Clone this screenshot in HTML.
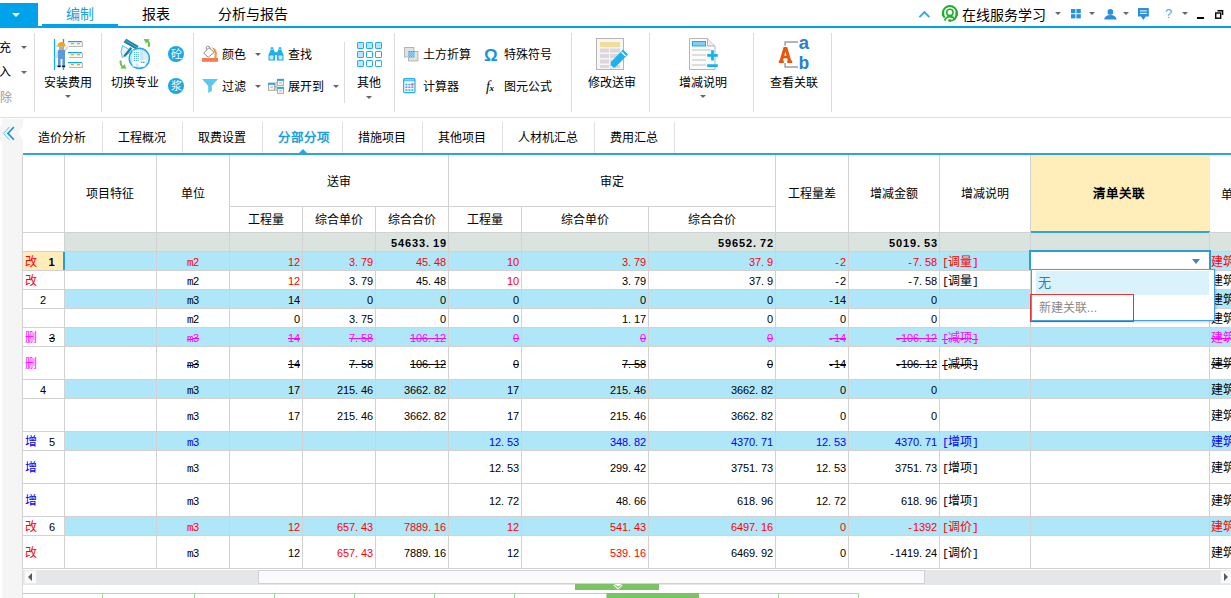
<!DOCTYPE html>
<html lang="zh-CN"><head><meta charset="utf-8"><title>UI</title><style>
*{box-sizing:border-box;margin:0;padding:0}
html,body{width:1231px;height:598px;overflow:hidden;background:#fff}
body{position:relative;font-family:"Liberation Sans",sans-serif;font-size:12px;color:#000}
.a{position:absolute;white-space:nowrap;overflow:hidden}
.t{position:absolute;white-space:nowrap;line-height:14px;height:14px}
.c{text-align:center}
.j{text-align:justify;text-align-last:justify}
.r{text-align:right}
.n{font-family:"Liberation Sans",sans-serif;font-size:11px;letter-spacing:-0.12px}
.n i{font-style:normal}
.n i.p{letter-spacing:2.94px}
.n i.h{letter-spacing:1.2px;padding-left:1.14px}
.n i.m{font-family:"Liberation Mono",monospace;letter-spacing:-0.6px}
.n.b{letter-spacing:0.88px}
.n.b i.p{letter-spacing:3.94px}
.k{font-family:"Liberation Mono",monospace;font-size:11.5px;letter-spacing:-0.9px}
.b{font-weight:bold}
.red{color:#f00}.mag{color:#f0f}.blu{color:#00f}
.s{text-decoration:line-through}
.da{position:absolute;width:0;height:0;border-left:3px solid transparent;border-right:3px solid transparent;border-top:3px solid #666}
.vs{position:absolute;width:1px;background:#dcdcdc}
.hl{position:absolute;height:1px;background:#d2d2d2}
.vl{position:absolute;width:1px;background:#d2d2d2}
.cell{position:absolute;white-space:nowrap;overflow:hidden;height:14px;line-height:14px}
</style></head><body>
<div class="a" style="left:0;top:26px;width:1231px;height:2px;background:#00a2e9"></div>
<div class="a" style="left:0;top:3px;width:38px;height:25px;background:#00a2e9"></div>
<div class="a" style="left:12px;top:13px;width:0;height:0;border-left:4px solid transparent;border-right:4px solid transparent;border-top:4px solid #fff"></div>
<div class="a" style="left:42px;top:24px;width:76px;height:4px;background:#00a2e9"></div>
<div class="t j" style="left:66px;top:5px;width:28px;font-size:14px;line-height:18px;height:18px;color:#1a9fe0">编制</div>
<div class="t j" style="left:142px;top:5px;width:28px;font-size:14px;line-height:18px;height:18px;color:#000">报表</div>
<div class="t j" style="left:218px;top:5px;width:70px;font-size:14px;line-height:18px;height:18px;color:#000">分析与报告</div>
<svg class="a" style="left:918px;top:10px" width="13" height="9" viewBox="0 0 13 9"><path d="M1.4 7.2 L6.4 2.2 L11.4 7.2" fill="none" stroke="#2ea8f0" stroke-width="1.9"/></svg>
<svg class="a" style="left:941px;top:5px" width="18" height="18" viewBox="0 0 18 18"><path d="M3.6 12.6 A7 7 0 1 1 14.2 12.6" fill="none" stroke="#1fae2b" stroke-width="1.9"/><rect x="0.9" y="6" width="2.4" height="5" rx="1" fill="#1fae2b"/><rect x="14.5" y="6" width="2.4" height="5" rx="1" fill="#1fae2b"/><circle cx="8.9" cy="7.4" r="3.2" fill="none" stroke="#1fae2b" stroke-width="1.5"/><path d="M3.6 15.6 Q5 11.6 8.9 11.6 Q12.6 11.6 14 14.6" fill="none" stroke="#1fae2b" stroke-width="1.7"/><path d="M15.6 11 Q14.6 15.4 9.6 15.6" fill="none" stroke="#1fae2b" stroke-width="1.3"/><ellipse cx="8.9" cy="15.6" rx="1.9" ry="1.3" fill="#1fae2b"/></svg>
<div class="t j" style="left:962px;top:6px;width:84px;font-size:14px;line-height:18px;height:18px">在线服务学习</div>
<div class="da" style="left:1055px;top:12px"></div>
<svg class="a" style="left:1071px;top:9px" width="10" height="10" viewBox="0 0 10 10"><rect x="0" y="0" width="4.4" height="4.2" fill="#2a8fdc"/><rect x="5.4" y="0" width="4.4" height="4.2" fill="#2a8fdc"/><rect x="0" y="5.2" width="4.4" height="4.2" fill="#2a8fdc"/><rect x="5.4" y="5.2" width="4.4" height="4.2" fill="#2a8fdc"/></svg>
<div class="da" style="left:1089px;top:12px"></div>
<svg class="a" style="left:1104px;top:9px" width="13" height="11" viewBox="0 0 13 11"><circle cx="6.4" cy="2.9" r="2.9" fill="#2a8fdc"/><path d="M0.2 10.6 Q0.8 6 6.4 6 Q12 6 12.6 10.6 Z" fill="#2a8fdc"/></svg>
<div class="da" style="left:1123px;top:12px"></div>
<svg class="a" style="left:1138px;top:8px" width="11" height="12" viewBox="0 0 11 12"><path d="M0 0 H10.8 V8.4 H7.8 L5.4 12 L3 8.4 H0 Z" fill="#2a8fdc"/><path d="M2 2.9 H8.8 M2 5.4 H8.8" stroke="#fff" stroke-width="1"/></svg>
<div class="t" style="left:1165px;top:6px;font-size:13px;line-height:16px;height:16px;color:#35b0ee">?</div>
<div class="da" style="left:1182px;top:12px"></div>
<div class="a" style="left:1197px;top:17px;width:7px;height:2px;background:#000"></div>
<svg class="a" style="left:1215px;top:10px" width="9" height="9" viewBox="0 0 9 9"><path d="M2.5 0.7 H7.6 V5" fill="none" stroke="#000" stroke-width="1.4"/><rect x="0.7" y="3" width="5" height="5.2" fill="#fff" stroke="#000" stroke-width="1.4"/></svg>
<div class="vs" style="left:34px;top:33px;height:79px"></div>
<div class="vs" style="left:101px;top:33px;height:79px"></div>
<div class="vs" style="left:193px;top:33px;height:79px"></div>
<div class="vs" style="left:394px;top:33px;height:79px"></div>
<div class="vs" style="left:571px;top:33px;height:79px"></div>
<div class="vs" style="left:649px;top:33px;height:79px"></div>
<div class="vs" style="left:753px;top:33px;height:79px"></div>
<div class="vs" style="left:831px;top:33px;height:79px"></div>
<div class="vs" style="left:344px;top:42px;height:61px"></div>
<div class="a" style="left:0;top:117px;width:1231px;height:1px;background:#dedede"></div>
<div class="t c" style="left:-1px;top:41px;width:12px">充</div>
<div class="da" style="left:21px;top:46px"></div>
<div class="t c" style="left:-1px;top:65px;width:12px">入</div>
<div class="da" style="left:21px;top:71px"></div>
<div class="t c" style="left:0px;top:91px;width:12px;color:#9a9a9a">除</div>
<svg class="a" style="left:53px;top:38px" width="31" height="33" viewBox="0 0 31 33">
<path d="M1.5 1 V32 M10.5 1 V32" stroke="#00aeef" stroke-width="1.2"/>
<path d="M1.5 8 H10.5 M1.5 19 H10.5 M1.5 28 H10.5" stroke="#7fd3f5" stroke-width="1"/>
<g><rect x="16" y="4" width="14" height="5" fill="#b9b9b9"/><rect x="15" y="3" width="14" height="5" fill="#f4f4f4"/><rect x="15" y="3" width="14" height="1.2" fill="#00aeef"/><path d="M18 5.7 H21 M24 5.7 H27" stroke="#f7a21b" stroke-width="1.2"/></g>
<g transform="translate(0,11)"><rect x="16" y="4" width="14" height="5" fill="#b9b9b9"/><rect x="15" y="3" width="14" height="5" fill="#f4f4f4"/><rect x="15" y="3" width="14" height="1.2" fill="#00aeef"/><path d="M18 5.7 H21 M24 5.7 H27" stroke="#f7a21b" stroke-width="1.2"/></g>
<g transform="translate(0,21)"><rect x="16" y="4" width="14" height="5" fill="#b9b9b9"/><rect x="15" y="3" width="14" height="5" fill="#f4f4f4"/><rect x="15" y="3" width="14" height="1.2" fill="#00aeef"/><path d="M18 5.7 H21 M24 5.7 H27" stroke="#f7a21b" stroke-width="1.2"/></g>
<path d="M4.5 8.5 Q4.5 4 8.5 4 Q12.5 4 12.5 8.5 Z" fill="#f7a21b"/>
<rect x="6" y="8.5" width="5" height="3.5" fill="#c9a98a"/>
<path d="M11 14 L15 8.5" stroke="#e3d3c0" stroke-width="1.6"/>
<path d="M3.5 13 L5.5 12 L5.5 20 L3 19 Z" fill="#d8d8d8"/>
<rect x="5" y="12" width="7" height="9" fill="#5a9ad8"/>
<rect x="5" y="21" width="2.6" height="7" fill="#5a9ad8"/><rect x="9.4" y="21" width="2.6" height="7" fill="#5a9ad8"/>
<rect x="4.6" y="27.6" width="3" height="1.6" fill="#111"/><rect x="9.2" y="27.6" width="3" height="1.6" fill="#111"/>
<path d="M10.5 1 V4.5 M10.5 29 V32" stroke="#00aeef" stroke-width="1.2"/>
</svg>
<div class="t j" style="left:44px;top:76px;width:48px">安装费用</div>
<div class="da" style="left:65px;top:95px"></div>
<svg class="a" style="left:119px;top:38px" width="32" height="32" viewBox="0 0 32 32">
<path d="M3.6 7.6 Q0.6 13.5 3.4 19.6 L13 13 Z" fill="#eef2f5" stroke="#4bbce9" stroke-width="1"/>
<path d="M5.2 18.2 L12.4 9.8" stroke="#1b7ea6" stroke-width="2.2"/>
<path d="M4.6 4.2 L7.2 0.8 L19.6 8 L17.2 11.6 Z" fill="#1b7ea6"/>
<path d="M6.6 2.6 L18 9.4" stroke="#5fb4d3" stroke-width="0.9"/>
<circle cx="20.3" cy="20.3" r="10.1" fill="#c4e8f6" stroke="#1fa8e0" stroke-width="1.4"/>
<path d="M24 13 L28.5 17 L29 24 L25 27 Z" fill="#d9f0f9"/>
<path d="M13.6 28.6 V12.6 H21 V22 H26.4 V28.6 H19.4 V25.4 H16.8 V28.6 Z" fill="#fff"/>
<g fill="#36ace2"><rect x="14.8" y="14" width="1.1" height="1.1"/><rect x="16.7" y="14" width="1.1" height="1.1"/><rect x="18.6" y="14" width="1.1" height="1.1"/>
<rect x="14.8" y="16" width="1.1" height="1.1"/><rect x="16.7" y="16" width="1.1" height="1.1"/><rect x="18.6" y="16" width="1.1" height="1.1"/>
<rect x="14.8" y="18" width="1.1" height="1.1"/><rect x="16.7" y="18" width="1.1" height="1.1"/><rect x="18.6" y="18" width="1.1" height="1.1"/>
<rect x="14.8" y="20" width="1.1" height="1.1"/><rect x="16.7" y="20" width="1.1" height="1.1"/><rect x="18.6" y="20" width="1.1" height="1.1"/>
<rect x="14.8" y="22" width="1.1" height="1.1"/><rect x="16.7" y="22" width="1.1" height="1.1"/><rect x="18.6" y="22" width="1.1" height="1.1"/>
<rect x="21.8" y="23.6" width="1.6" height="1.4"/><rect x="24" y="23.6" width="1.6" height="1.4"/></g>
<path d="M29.6 8.8 Q31 5.2 28.4 2.6" fill="none" stroke="#6cc04a" stroke-width="2"/>
<path d="M24.6 1 L30.8 1.2 L27 5.6 Z" fill="#6cc04a"/>
<path d="M1.8 22.6 Q0.8 26.6 3.8 29" fill="none" stroke="#6cc04a" stroke-width="2"/>
<path d="M7.4 30.8 L1.2 30.6 L5.6 26.2 Z" fill="#6cc04a"/>
</svg>
<div class="t j" style="left:111px;top:76px;width:48px">切换专业</div>
<div class="a c" style="left:168px;top:46px;width:16px;height:16px;border-radius:8px;background:#1ea7e1;color:#fff;font-size:11px;line-height:16px">砼</div>
<div class="a c" style="left:168px;top:78px;width:16px;height:16px;border-radius:8px;background:#1ea7e1;color:#fff;font-size:11px;line-height:16px">浆</div>
<svg class="a" style="left:202px;top:45px" width="17" height="18" viewBox="0 0 17 18">
<rect x="0" y="13" width="16" height="3.8" fill="#f47c52"/>
<path d="M9.6 2.2 Q14.6 3.4 14.8 8 L14.6 13 H12.4 L12.8 8.4 Q12.6 5.4 9.6 2.2 Z" fill="#f5962e"/>
<path d="M1.7 8.2 L6.9 2.7 L12.2 7.3 L6.3 12.3 Z" fill="#fff" stroke="#8d8d8d" stroke-width="1"/>
<path d="M4.4 4.6 Q3.4 1.4 5.6 1.1 Q7.8 0.9 8.4 3.8" fill="none" stroke="#8d8d8d" stroke-width="1"/>
</svg>
<div class="t j" style="left:222px;top:48px;width:24px">颜色</div>
<div class="da" style="left:255px;top:53px"></div>
<svg class="a" style="left:268px;top:47px" width="16" height="14" viewBox="0 0 16 14">
<path d="M2.9 0.3 H5.1 L5.5 2.2 L6.9 5.2 L7.1 13.4 H0.5 V7.6 L2.2 4.2 L2.6 2.2 Z" fill="#1eb0ee"/>
<path d="M13.1 0.3 H10.9 L10.5 2.2 L9.1 5.2 L8.9 13.4 H15.5 V7.6 L13.8 4.2 L13.4 2.2 Z" fill="#1eb0ee"/>
<rect x="6.6" y="5.2" width="2.8" height="3" fill="#1eb0ee"/>
<path d="M2.9 2.4 H5.1 M10.9 2.4 H13.1" stroke="#bfe9fb" stroke-width="0.8"/>
<rect x="1.6" y="8.4" width="3.8" height="4" rx="0.8" fill="#c6ecfc"/><rect x="10.6" y="8.4" width="3.8" height="4" rx="0.8" fill="#c6ecfc"/>
</svg>
<div class="t j" style="left:288px;top:48px;width:24px">查找</div>
<svg class="a" style="left:202px;top:79px" width="16" height="14" viewBox="0 0 16 14"><path d="M0 0 H16 L9.8 7 V12 L6.2 14 V7 Z" fill="#5cc8f2"/></svg>
<div class="t j" style="left:222px;top:80px;width:24px">过滤</div>
<div class="da" style="left:255px;top:85px"></div>
<svg class="a" style="left:268px;top:78px" width="16" height="17" viewBox="0 0 16 17">
<path d="M6.6 8.8 H9 M7.9 4.4 V12.4 M7.9 4.4 H9 M7.9 12.4 H9" stroke="#a4a4a4" stroke-width="1" fill="none"/>
<rect x="0.5" y="5.3" width="6" height="7" fill="#f6f4ee" stroke="#ababab" stroke-width="1"/><rect x="0" y="4.8" width="7" height="2" fill="#27a9e6"/><path d="M2 9.2 H5" stroke="#bdb7aa" stroke-width="1"/>
<rect x="9.5" y="1.4" width="6" height="6" fill="#f6f4ee" stroke="#ababab" stroke-width="1"/><rect x="9" y="0.9" width="7" height="2" fill="#27a9e6"/><path d="M11 4.9 H14" stroke="#bdb7aa" stroke-width="1"/>
<rect x="9.5" y="9.4" width="6" height="6" fill="#f6f4ee" stroke="#ababab" stroke-width="1"/><rect x="9" y="8.9" width="7" height="2" fill="#27a9e6"/><path d="M11 12.9 H14" stroke="#bdb7aa" stroke-width="1"/>
</svg>
<div class="t j" style="left:288px;top:80px;width:36px">展开到</div>
<div class="da" style="left:333px;top:85px"></div>
<svg class="a" style="left:357px;top:42px" width="26" height="26" viewBox="0 0 26 26"><rect x="0.5" y="0.5" width="6" height="6" rx="0.6" fill="#bfe2f7" stroke="#18b0ee" stroke-width="1"/><rect x="9.5" y="0.5" width="6" height="6" rx="0.6" fill="#bfe2f7" stroke="#18b0ee" stroke-width="1"/><rect x="18.5" y="0.5" width="6" height="6" rx="0.6" fill="#bfe2f7" stroke="#18b0ee" stroke-width="1"/><rect x="0.5" y="9.5" width="6" height="6" rx="0.6" fill="#bfe2f7" stroke="#18b0ee" stroke-width="1"/><rect x="9.5" y="9.5" width="6" height="6" rx="0.6" fill="#fff" stroke="#18b0ee" stroke-width="1"/><rect x="18.5" y="9.5" width="6" height="6" rx="0.6" fill="#fff" stroke="#18b0ee" stroke-width="1"/><rect x="0.5" y="18.5" width="6" height="6" rx="0.6" fill="#bfe2f7" stroke="#18b0ee" stroke-width="1"/><rect x="9.5" y="18.5" width="6" height="6" rx="0.6" fill="#fff" stroke="#18b0ee" stroke-width="1"/><rect x="18.5" y="18.5" width="6" height="6" rx="0.6" fill="#fff" stroke="#18b0ee" stroke-width="1"/></svg>
<div class="t j" style="left:357px;top:76px;width:24px">其他</div>
<div class="da" style="left:366px;top:96px"></div>
<svg class="a" style="left:404px;top:47px" width="15" height="15" viewBox="0 0 15 15">
<rect x="0.5" y="0.5" width="9.4" height="9.4" fill="#e2e2e2" stroke="#b4b4b4"/>
<rect x="4.5" y="4.5" width="9.4" height="9.4" fill="#e2e2e2" stroke="#b4b4b4"/>
<rect x="4" y="4" width="6.4" height="6.4" fill="#27a9e6"/>
<path d="M4 5.1 H10.4 M4 7.2 H10.4 M4 9.3 H10.4" stroke="#d8f1fc" stroke-width="1" stroke-dasharray="1.05 1.05"/>
<path d="M4 6.15 H10.4 M4 8.25 H10.4" stroke="#d8f1fc" stroke-width="1" stroke-dasharray="1.05 1.05" stroke-dashoffset="1.05"/>
</svg>
<div class="t j" style="left:423px;top:48px;width:48px">土方折算</div>
<div class="t" style="left:484px;top:47px;font-size:17px;line-height:18px;height:18px;color:#1f92d6;font-weight:bold">Ω</div>
<div class="t j" style="left:504px;top:48px;width:48px">特殊符号</div>
<svg class="a" style="left:403px;top:78px" width="13" height="16" viewBox="0 0 13 16">
<rect x="0.6" y="0.6" width="11.4" height="14" rx="1.2" fill="#f3faff" stroke="#27b0f0" stroke-width="1.2"/>
<rect x="0.6" y="0.6" width="11.4" height="2.6" rx="1" fill="#27b0f0"/>
<path d="M1.6 1.9 H11" stroke="#e6f6fe" stroke-width="0.8"/>
<path d="M2.4 6.4 H10.4 M2.4 9.2 H10.4 M2.4 12 H10.4" stroke="#4f9fe0" stroke-width="1.5" stroke-dasharray="2 1"/>
<rect x="8.3" y="5.5" width="2.1" height="1.8" fill="#f04a3a"/>
</svg>
<div class="t j" style="left:423px;top:80px;width:36px">计算器</div>
<div class="t" style="left:486px;top:79px;font-family:'Liberation Serif',serif;font-style:italic;font-size:14px;line-height:16px;height:16px;letter-spacing:-0.5px">f<span style="font-size:9px;font-weight:bold">x</span></div>
<div class="t j" style="left:504px;top:80px;width:48px">图元公式</div>
<svg class="a" style="left:596px;top:38px" width="34" height="34" viewBox="0 0 34 34">
<rect x="0.5" y="0.5" width="27" height="31" fill="#f6f6f6" stroke="#b5b5b5"/>
<rect x="4" y="4" width="20" height="5" fill="#f3dc9a"/>
<g fill="#dbd7dc"><rect x="4" y="10.5" width="9" height="4"/><rect x="14" y="10.5" width="10" height="4"/><rect x="4" y="16" width="9" height="4"/><rect x="14" y="16" width="10" height="4"/><rect x="4" y="21.5" width="9" height="4"/><rect x="14" y="21.5" width="10" height="4"/><rect x="4" y="27" width="9" height="3"/><rect x="14" y="27" width="10" height="3"/></g>
<path d="M27 11.5 L32 16.5 L19.5 29 L14 30.5 L15 24 Z" fill="#1cb2ee"/>
<path d="M25.5 14 L29.5 18" stroke="#fff" stroke-width="1.2"/>
<path d="M14 30.5 L14.6 27 L17.5 29.6 Z" fill="#fff"/>
</svg>
<div class="t j" style="left:588px;top:76px;width:48px">修改送审</div>
<svg class="a" style="left:689px;top:37px" width="31" height="34" viewBox="0 0 31 34">
<path d="M0.5 1.5 H18.5 L26 9 V32.5 H0.5 Z" fill="#fbfbfb" stroke="#b5b5b5"/>
<path d="M18.5 1.5 V9 H26" fill="#ececec" stroke="#b5b5b5"/>
<rect x="3.5" y="4.5" width="13" height="4.5" fill="#7fd0f3" stroke="#27a9e6" stroke-width="1"/>
<path d="M3 13 H22 M3 18 H17 M3 23 H17 M3 28 H17" stroke="#dedede" stroke-width="1.8"/>
<path d="M18.2 18.4 H28.8 M23.5 13.2 V23.6 M18.2 28.6 H28.8" stroke="#12b4f0" stroke-width="2.8"/>
</svg>
<div class="t j" style="left:679px;top:76px;width:48px">增减说明</div>
<div class="da" style="left:700px;top:95px"></div>
<svg class="a" style="left:778px;top:37px" width="33" height="34" viewBox="0 0 33 34">
<path d="M20 4.9 H7.1 V8.8 M7.1 26 V29.9 H20" fill="none" stroke="#9d9d9d" stroke-width="1.5"/>
<path fill-rule="evenodd" d="M5.6 10 H9.2 L13.3 24 H10 L9.2 21.2 H5.6 L4.8 24 H1.5 Z M6.3 18.8 H8.5 L7.4 14.4 Z" fill="#e8560c"/>
<path d="M0.8 24.7 H5.8 M9.2 24.7 H14.2" stroke="#e8560c" stroke-width="2.4"/>
<text x="20.2" y="11.8" style="font-family:'Liberation Mono',monospace;font-weight:bold;font-size:19px" fill="#2a80d2">a</text>
<text x="20.6" y="31.6" style="font-family:'Liberation Mono',monospace;font-weight:bold;font-size:18px" fill="#2a80d2">b</text>
</svg>
<div class="t j" style="left:770px;top:76px;width:48px">查看关联</div>
<div class="a" style="left:2px;top:119px;width:21px;height:479px;background:#f5f5f5"></div>
<div class="a" style="left:0;top:126px;width:2px;height:15px;background:#f5f5f5"></div>
<svg class="a" style="left:18px;top:125px" width="5" height="17" viewBox="0 0 5 17"><path d="M5 0.8 L0.5 8.3 L5 15.8 Z" fill="#fff"/></svg>
<svg class="a" style="left:2px;top:126px" width="14" height="15" viewBox="0 0 14 15"><path d="M7.4 1 L1.4 7.4 L7.4 13.8" fill="none" stroke="#4cc0f0" stroke-width="0.9"/><path d="M11.9 1 L5.9 7.4 L11.9 13.8" fill="none" stroke="#0e96cf" stroke-width="1.6"/></svg>
<div class="a" style="left:23px;top:153px;width:1208px;height:2px;background:#2aa6dd"></div>
<div class="vs" style="left:102px;top:122px;height:31px;background:#e1e1e1"></div>
<div class="t j" style="left:38px;top:131px;width:48px">造价分析</div>
<div class="vs" style="left:182px;top:122px;height:31px;background:#e1e1e1"></div>
<div class="t j" style="left:118px;top:131px;width:48px">工程概况</div>
<div class="vs" style="left:262px;top:122px;height:31px;background:#e1e1e1"></div>
<div class="t j" style="left:198px;top:131px;width:48px">取费设置</div>
<div class="vs" style="left:342px;top:122px;height:31px;background:#e1e1e1"></div>
<div class="t j b" style="left:278px;top:131px;width:50px;font-size:12.5px;color:#1a9fe0">分部分项</div>
<div class="a" style="left:299px;top:149px;width:0;height:0;border-left:4px solid transparent;border-right:4px solid transparent;border-bottom:4px solid #2aa6dd"></div>
<div class="vs" style="left:422px;top:122px;height:31px;background:#e1e1e1"></div>
<div class="t j" style="left:358px;top:131px;width:48px">措施项目</div>
<div class="vs" style="left:502px;top:122px;height:31px;background:#e1e1e1"></div>
<div class="t j" style="left:438px;top:131px;width:48px">其他项目</div>
<div class="vs" style="left:594px;top:122px;height:31px;background:#e1e1e1"></div>
<div class="t j" style="left:518px;top:131px;width:60px">人材机汇总</div>
<div class="vs" style="left:674px;top:122px;height:31px;background:#e1e1e1"></div>
<div class="t j" style="left:610px;top:131px;width:48px">费用汇总</div>
<div class="a" style="left:65px;top:233px;width:1166px;height:18px;background:#dbe3df"></div>
<div class="a" style="left:65px;top:252px;width:1166px;height:18px;background:#afe7f9"></div>
<div class="a" style="left:23px;top:252px;width:41px;height:18px;background:#ffecb8"></div>
<div class="a" style="left:63px;top:252px;width:2px;height:18px;background:#2a9bd8"></div>
<div class="t c" style="left:25px;top:255px;width:12px;color:#f00">改</div>
<div class="cell n c b" style="left:44px;top:255px;width:16px">1</div>
<div class="cell n c red" style="left:157px;top:255px;width:72px"><i class="m">m</i>2</div>
<div class="cell n r red" style="left:230px;top:255px;width:70px;padding-right:0">12</div>
<div class="cell n r red" style="left:303px;top:255px;width:70px;padding-right:0">3<i class="p">.</i>79</div>
<div class="cell n r red" style="left:376px;top:255px;width:70px;padding-right:0">45<i class="p">.</i>48</div>
<div class="cell n r red" style="left:449px;top:255px;width:70px;padding-right:0">10</div>
<div class="cell n r red" style="left:522px;top:255px;width:124px;padding-right:0">3<i class="p">.</i>79</div>
<div class="cell n r red" style="left:649px;top:255px;width:124px;padding-right:0">37<i class="p">.</i>9</div>
<div class="cell n r red" style="left:776px;top:255px;width:70px;padding-right:0"><i class="h">-</i>2</div>
<div class="cell n r red" style="left:849px;top:255px;width:88px;padding-right:0"><i class="h">-</i>7<i class="p">.</i>58</div>
<div class="cell j red" style="left:942px;top:255px;width:36px"><span class="k">[</span>调量<span class="k">]</span></div>
<div class="cell j red" style="left:1211px;top:255px;width:24px">建筑</div>
<div class="t c" style="left:25px;top:274px;width:12px;color:#f00">改</div>
<div class="cell n c " style="left:157px;top:274px;width:72px"><i class="m">m</i>2</div>
<div class="cell n r red" style="left:230px;top:274px;width:70px;padding-right:0">12</div>
<div class="cell n r " style="left:303px;top:274px;width:70px;padding-right:0">3<i class="p">.</i>79</div>
<div class="cell n r " style="left:376px;top:274px;width:70px;padding-right:0">45<i class="p">.</i>48</div>
<div class="cell n r red" style="left:449px;top:274px;width:70px;padding-right:0">10</div>
<div class="cell n r " style="left:522px;top:274px;width:124px;padding-right:0">3<i class="p">.</i>79</div>
<div class="cell n r " style="left:649px;top:274px;width:124px;padding-right:0">37<i class="p">.</i>9</div>
<div class="cell n r " style="left:776px;top:274px;width:70px;padding-right:0"><i class="h">-</i>2</div>
<div class="cell n r " style="left:849px;top:274px;width:88px;padding-right:0"><i class="h">-</i>7<i class="p">.</i>58</div>
<div class="cell j " style="left:942px;top:274px;width:36px"><span class="k">[</span>调量<span class="k">]</span></div>
<div class="cell j " style="left:1211px;top:274px;width:24px">建筑</div>
<div class="a" style="left:65px;top:290px;width:1166px;height:18px;background:#afe7f9"></div>
<div class="cell n c" style="left:35px;top:293px;width:16px">2</div>
<div class="cell n c " style="left:157px;top:293px;width:72px"><i class="m">m</i>3</div>
<div class="cell n r " style="left:230px;top:293px;width:70px;padding-right:0">14</div>
<div class="cell n r " style="left:303px;top:293px;width:70px;padding-right:0">0</div>
<div class="cell n r " style="left:376px;top:293px;width:70px;padding-right:0">0</div>
<div class="cell n r " style="left:449px;top:293px;width:70px;padding-right:0">0</div>
<div class="cell n r " style="left:522px;top:293px;width:124px;padding-right:0">0</div>
<div class="cell n r " style="left:649px;top:293px;width:124px;padding-right:0">0</div>
<div class="cell n r " style="left:776px;top:293px;width:70px;padding-right:0"><i class="h">-</i>14</div>
<div class="cell n r " style="left:849px;top:293px;width:88px;padding-right:0">0</div>
<div class="cell j " style="left:1211px;top:293px;width:24px">建筑</div>
<div class="cell n c " style="left:157px;top:312px;width:72px"><i class="m">m</i>2</div>
<div class="cell n r " style="left:230px;top:312px;width:70px;padding-right:0">0</div>
<div class="cell n r " style="left:303px;top:312px;width:70px;padding-right:0">3<i class="p">.</i>75</div>
<div class="cell n r " style="left:376px;top:312px;width:70px;padding-right:0">0</div>
<div class="cell n r " style="left:449px;top:312px;width:70px;padding-right:0">0</div>
<div class="cell n r " style="left:522px;top:312px;width:124px;padding-right:0">1<i class="p">.</i>17</div>
<div class="cell n r " style="left:649px;top:312px;width:124px;padding-right:0">0</div>
<div class="cell n r " style="left:776px;top:312px;width:70px;padding-right:0">0</div>
<div class="cell n r " style="left:849px;top:312px;width:88px;padding-right:0">0</div>
<div class="cell j " style="left:1211px;top:312px;width:24px">建筑</div>
<div class="a" style="left:65px;top:328px;width:1166px;height:18px;background:#afe7f9"></div>
<div class="t c" style="left:25px;top:331px;width:12px;color:#f0f">删</div>
<div class="cell n c s" style="left:44px;top:331px;width:16px">3</div>
<div class="cell n c mag s" style="left:157px;top:331px;width:72px"><i class="m">m</i>3</div>
<div class="cell n r mag s" style="left:230px;top:331px;width:70px;padding-right:0">14</div>
<div class="cell n r mag s" style="left:303px;top:331px;width:70px;padding-right:0">7<i class="p">.</i>58</div>
<div class="cell n r mag s" style="left:376px;top:331px;width:70px;padding-right:0">106<i class="p">.</i>12</div>
<div class="cell n r mag s" style="left:449px;top:331px;width:70px;padding-right:0">0</div>
<div class="cell n r mag s" style="left:522px;top:331px;width:124px;padding-right:0">0</div>
<div class="cell n r mag s" style="left:649px;top:331px;width:124px;padding-right:0">0</div>
<div class="cell n r mag s" style="left:776px;top:331px;width:70px;padding-right:0"><i class="h">-</i>14</div>
<div class="cell n r mag s" style="left:849px;top:331px;width:88px;padding-right:0"><i class="h">-</i>106<i class="p">.</i>12</div>
<div class="cell j mag s" style="left:942px;top:331px;width:36px"><span class="k">[</span>减项<span class="k">]</span></div>
<div class="cell j mag s" style="left:1211px;top:331px;width:24px">建筑</div>
<div class="t c" style="left:25px;top:357px;width:12px;color:#f0f">删</div>
<div class="cell n c s" style="left:157px;top:357px;width:72px"><i class="m">m</i>3</div>
<div class="cell n r s" style="left:230px;top:357px;width:70px;padding-right:0">14</div>
<div class="cell n r s" style="left:303px;top:357px;width:70px;padding-right:0">7<i class="p">.</i>58</div>
<div class="cell n r s" style="left:376px;top:357px;width:70px;padding-right:0">106<i class="p">.</i>12</div>
<div class="cell n r s" style="left:449px;top:357px;width:70px;padding-right:0">0</div>
<div class="cell n r s" style="left:522px;top:357px;width:124px;padding-right:0">7<i class="p">.</i>58</div>
<div class="cell n r s" style="left:649px;top:357px;width:124px;padding-right:0">0</div>
<div class="cell n r s" style="left:776px;top:357px;width:70px;padding-right:0"><i class="h">-</i>14</div>
<div class="cell n r s" style="left:849px;top:357px;width:88px;padding-right:0"><i class="h">-</i>106<i class="p">.</i>12</div>
<div class="cell j s" style="left:942px;top:357px;width:36px"><span class="k">[</span>减项<span class="k">]</span></div>
<div class="cell j s" style="left:1211px;top:357px;width:24px">建筑</div>
<div class="a" style="left:65px;top:380px;width:1166px;height:18px;background:#afe7f9"></div>
<div class="cell n c" style="left:35px;top:383px;width:16px">4</div>
<div class="cell n c " style="left:157px;top:383px;width:72px"><i class="m">m</i>3</div>
<div class="cell n r " style="left:230px;top:383px;width:70px;padding-right:0">17</div>
<div class="cell n r " style="left:303px;top:383px;width:70px;padding-right:0">215<i class="p">.</i>46</div>
<div class="cell n r " style="left:376px;top:383px;width:70px;padding-right:0">3662<i class="p">.</i>82</div>
<div class="cell n r " style="left:449px;top:383px;width:70px;padding-right:0">17</div>
<div class="cell n r " style="left:522px;top:383px;width:124px;padding-right:0">215<i class="p">.</i>46</div>
<div class="cell n r " style="left:649px;top:383px;width:124px;padding-right:0">3662<i class="p">.</i>82</div>
<div class="cell n r " style="left:776px;top:383px;width:70px;padding-right:0">0</div>
<div class="cell n r " style="left:849px;top:383px;width:88px;padding-right:0">0</div>
<div class="cell j " style="left:1211px;top:383px;width:24px">建筑</div>
<div class="cell n c " style="left:157px;top:409px;width:72px"><i class="m">m</i>3</div>
<div class="cell n r " style="left:230px;top:409px;width:70px;padding-right:0">17</div>
<div class="cell n r " style="left:303px;top:409px;width:70px;padding-right:0">215<i class="p">.</i>46</div>
<div class="cell n r " style="left:376px;top:409px;width:70px;padding-right:0">3662<i class="p">.</i>82</div>
<div class="cell n r " style="left:449px;top:409px;width:70px;padding-right:0">17</div>
<div class="cell n r " style="left:522px;top:409px;width:124px;padding-right:0">215<i class="p">.</i>46</div>
<div class="cell n r " style="left:649px;top:409px;width:124px;padding-right:0">3662<i class="p">.</i>82</div>
<div class="cell n r " style="left:776px;top:409px;width:70px;padding-right:0">0</div>
<div class="cell n r " style="left:849px;top:409px;width:88px;padding-right:0">0</div>
<div class="cell j " style="left:1211px;top:409px;width:24px">建筑</div>
<div class="a" style="left:65px;top:432px;width:1166px;height:18px;background:#afe7f9"></div>
<div class="t c" style="left:25px;top:435px;width:12px;color:#00f">增</div>
<div class="cell n c" style="left:44px;top:435px;width:16px">5</div>
<div class="cell n c blu" style="left:157px;top:435px;width:72px"><i class="m">m</i>3</div>
<div class="cell n r blu" style="left:449px;top:435px;width:70px;padding-right:0">12<i class="p">.</i>53</div>
<div class="cell n r blu" style="left:522px;top:435px;width:124px;padding-right:0">348<i class="p">.</i>82</div>
<div class="cell n r blu" style="left:649px;top:435px;width:124px;padding-right:0">4370<i class="p">.</i>71</div>
<div class="cell n r blu" style="left:776px;top:435px;width:70px;padding-right:0">12<i class="p">.</i>53</div>
<div class="cell n r blu" style="left:849px;top:435px;width:88px;padding-right:0">4370<i class="p">.</i>71</div>
<div class="cell j blu" style="left:942px;top:435px;width:36px"><span class="k">[</span>增项<span class="k">]</span></div>
<div class="cell j blu" style="left:1211px;top:435px;width:24px">建筑</div>
<div class="t c" style="left:25px;top:461px;width:12px;color:#00f">增</div>
<div class="cell n c " style="left:157px;top:461px;width:72px"><i class="m">m</i>3</div>
<div class="cell n r " style="left:449px;top:461px;width:70px;padding-right:0">12<i class="p">.</i>53</div>
<div class="cell n r " style="left:522px;top:461px;width:124px;padding-right:0">299<i class="p">.</i>42</div>
<div class="cell n r " style="left:649px;top:461px;width:124px;padding-right:0">3751<i class="p">.</i>73</div>
<div class="cell n r " style="left:776px;top:461px;width:70px;padding-right:0">12<i class="p">.</i>53</div>
<div class="cell n r " style="left:849px;top:461px;width:88px;padding-right:0">3751<i class="p">.</i>73</div>
<div class="cell j " style="left:942px;top:461px;width:36px"><span class="k">[</span>增项<span class="k">]</span></div>
<div class="cell j " style="left:1211px;top:461px;width:24px">建筑</div>
<div class="t c" style="left:25px;top:494px;width:12px;color:#00f">增</div>
<div class="cell n c " style="left:157px;top:494px;width:72px"><i class="m">m</i>3</div>
<div class="cell n r " style="left:449px;top:494px;width:70px;padding-right:0">12<i class="p">.</i>72</div>
<div class="cell n r " style="left:522px;top:494px;width:124px;padding-right:0">48<i class="p">.</i>66</div>
<div class="cell n r " style="left:649px;top:494px;width:124px;padding-right:0">618<i class="p">.</i>96</div>
<div class="cell n r " style="left:776px;top:494px;width:70px;padding-right:0">12<i class="p">.</i>72</div>
<div class="cell n r " style="left:849px;top:494px;width:88px;padding-right:0">618<i class="p">.</i>96</div>
<div class="cell j " style="left:942px;top:494px;width:36px"><span class="k">[</span>增项<span class="k">]</span></div>
<div class="cell j " style="left:1211px;top:494px;width:24px">建筑</div>
<div class="a" style="left:65px;top:517px;width:1166px;height:18px;background:#afe7f9"></div>
<div class="t c" style="left:25px;top:520px;width:12px;color:#f00">改</div>
<div class="cell n c" style="left:44px;top:520px;width:16px">6</div>
<div class="cell n c red" style="left:157px;top:520px;width:72px"><i class="m">m</i>3</div>
<div class="cell n r red" style="left:230px;top:520px;width:70px;padding-right:0">12</div>
<div class="cell n r red" style="left:303px;top:520px;width:70px;padding-right:0">657<i class="p">.</i>43</div>
<div class="cell n r red" style="left:376px;top:520px;width:70px;padding-right:0">7889<i class="p">.</i>16</div>
<div class="cell n r red" style="left:449px;top:520px;width:70px;padding-right:0">12</div>
<div class="cell n r red" style="left:522px;top:520px;width:124px;padding-right:0">541<i class="p">.</i>43</div>
<div class="cell n r red" style="left:649px;top:520px;width:124px;padding-right:0">6497<i class="p">.</i>16</div>
<div class="cell n r red" style="left:776px;top:520px;width:70px;padding-right:0">0</div>
<div class="cell n r red" style="left:849px;top:520px;width:88px;padding-right:0"><i class="h">-</i>1392</div>
<div class="cell j red" style="left:942px;top:520px;width:36px"><span class="k">[</span>调价<span class="k">]</span></div>
<div class="cell j red" style="left:1211px;top:520px;width:24px">建筑</div>
<div class="t c" style="left:25px;top:546px;width:12px;color:#f00">改</div>
<div class="cell n c " style="left:157px;top:546px;width:72px"><i class="m">m</i>3</div>
<div class="cell n r " style="left:230px;top:546px;width:70px;padding-right:0">12</div>
<div class="cell n r red" style="left:303px;top:546px;width:70px;padding-right:0">657<i class="p">.</i>43</div>
<div class="cell n r " style="left:376px;top:546px;width:70px;padding-right:0">7889<i class="p">.</i>16</div>
<div class="cell n r " style="left:449px;top:546px;width:70px;padding-right:0">12</div>
<div class="cell n r red" style="left:522px;top:546px;width:124px;padding-right:0">539<i class="p">.</i>16</div>
<div class="cell n r " style="left:649px;top:546px;width:124px;padding-right:0">6469<i class="p">.</i>92</div>
<div class="cell n r " style="left:776px;top:546px;width:70px;padding-right:0">0</div>
<div class="cell n r " style="left:849px;top:546px;width:88px;padding-right:0"><i class="h">-</i>1419<i class="p">.</i>24</div>
<div class="cell j " style="left:942px;top:546px;width:36px"><span class="k">[</span>调价<span class="k">]</span></div>
<div class="cell j " style="left:1211px;top:546px;width:24px">建筑</div>
<div class="cell n r b" style="left:376px;top:236px;width:71px;padding-right:0">54633<i class="p">.</i>19</div>
<div class="cell n r b" style="left:649px;top:236px;width:125px;padding-right:0">59652<i class="p">.</i>72</div>
<div class="cell n r b" style="left:849px;top:236px;width:89px;padding-right:0">5019<i class="p">.</i>53</div>
<div class="a" style="left:1031px;top:155px;width:179px;height:77px;background:#ffeeba"></div>
<div class="a" style="left:1031px;top:231px;width:179px;height:2px;background:#2aa6dd"></div>
<div class="hl" style="left:22px;top:232px;width:1009px"></div>
<div class="hl" style="left:1210px;top:232px;width:21px"></div>
<div class="hl" style="left:229px;top:206px;width:546px"></div>
<div class="hl" style="left:22px;top:251px;width:1209px"></div>
<div class="hl" style="left:22px;top:270px;width:1209px"></div>
<div class="hl" style="left:22px;top:289px;width:1209px"></div>
<div class="hl" style="left:22px;top:308px;width:1209px"></div>
<div class="hl" style="left:22px;top:327px;width:1209px"></div>
<div class="hl" style="left:22px;top:346px;width:1209px"></div>
<div class="hl" style="left:22px;top:379px;width:1209px"></div>
<div class="hl" style="left:22px;top:398px;width:1209px"></div>
<div class="hl" style="left:22px;top:431px;width:1209px"></div>
<div class="hl" style="left:22px;top:450px;width:1209px"></div>
<div class="hl" style="left:22px;top:483px;width:1209px"></div>
<div class="hl" style="left:22px;top:516px;width:1209px"></div>
<div class="hl" style="left:22px;top:535px;width:1209px"></div>
<div class="hl" style="left:22px;top:568px;width:1209px"></div>
<div class="vl" style="left:22px;top:155px;height:414px"></div>
<div class="vl" style="left:64px;top:155px;height:414px"></div>
<div class="vl" style="left:156px;top:155px;height:414px"></div>
<div class="vl" style="left:229px;top:155px;height:414px"></div>
<div class="vl" style="left:302px;top:206px;height:363px"></div>
<div class="vl" style="left:375px;top:206px;height:363px"></div>
<div class="vl" style="left:448px;top:155px;height:414px"></div>
<div class="vl" style="left:521px;top:206px;height:363px"></div>
<div class="vl" style="left:648px;top:206px;height:363px"></div>
<div class="vl" style="left:775px;top:155px;height:414px"></div>
<div class="vl" style="left:848px;top:155px;height:414px"></div>
<div class="vl" style="left:939px;top:155px;height:414px"></div>
<div class="vl" style="left:1030px;top:155px;height:414px"></div>
<div class="vl" style="left:1209px;top:232px;height:337px"></div>
<div class="a" style="left:63px;top:252px;width:2px;height:18px;background:#2a9bd8"></div>
<div class="t j" style="left:86px;top:187px;width:48px">项目特征</div>
<div class="t j" style="left:181px;top:187px;width:24px">单位</div>
<div class="t j" style="left:327px;top:175px;width:24px">送审</div>
<div class="t j" style="left:600px;top:175px;width:24px">审定</div>
<div class="t j" style="left:248px;top:213px;width:36px">工程量</div>
<div class="t j" style="left:315px;top:213px;width:48px">综合单价</div>
<div class="t j" style="left:388px;top:213px;width:48px">综合合价</div>
<div class="t j" style="left:467px;top:213px;width:36px">工程量</div>
<div class="t j" style="left:561px;top:213px;width:48px">综合单价</div>
<div class="t j" style="left:688px;top:213px;width:48px">综合合价</div>
<div class="t j" style="left:788px;top:187px;width:48px">工程量差</div>
<div class="t j" style="left:870px;top:187px;width:48px">增减金额</div>
<div class="t j" style="left:961px;top:187px;width:48px">增减说明</div>
<div class="t j b" style="left:1093px;top:187px;width:50px;font-size:12.5px">清单关联</div>
<div class="t c" style="left:1221px;top:188px;width:12px">单</div>
<div class="a" style="left:1029px;top:250px;width:182px;height:20px;background:#fff;border:2px solid #2b9dd0;border-bottom-width:1px"></div>
<div class="a" style="left:1192px;top:259px;width:0;height:0;border-left:4.5px solid transparent;border-right:4.5px solid transparent;border-top:5px solid #4585bf"></div>
<div class="a" style="left:1031px;top:269px;width:184px;height:52px;background:#fff;border:1px solid #44a3da;box-shadow:1px 1px 2px rgba(0,0,40,.22)"></div>
<div class="a" style="left:1036px;top:271px;width:173px;height:24px;background:#daf2fb"></div>
<div class="t c" style="left:1038px;top:275px;width:13px;font-size:13px;line-height:16px;height:16px;color:#2a7fc0">无</div>
<div class="t j" style="left:1039px;top:301px;width:58px;color:#8a8a8a">新建关联...</div>
<div class="a" style="left:1030px;top:294px;width:104px;height:28px;border:1.4px solid #e63535"></div>
<div class="a" style="left:23px;top:570px;width:1208px;height:15px;background:#e5e6e8"></div>
<div class="a" style="left:258px;top:570px;width:667px;height:14px;background:#fafafa;border:1px solid #ced1d7"></div>
<div class="a" style="left:24px;top:570px;width:13px;height:14px;background:#fafafa;border:1px solid #e9eaec"></div>
<div class="a" style="left:28px;top:573px;width:0;height:0;border-top:4px solid transparent;border-bottom:4px solid transparent;border-right:4.5px solid #555a64"></div>
<div class="a" style="left:1220px;top:570px;width:13px;height:14px;background:#fafafa;border:1px solid #e9eaec"></div>
<div class="a" style="left:1224px;top:573px;width:0;height:0;border-top:4px solid transparent;border-bottom:4px solid transparent;border-left:4.5px solid #555a64"></div>
<div class="a" style="left:22px;top:569px;width:1px;height:29px;background:#dcdcdc"></div>
<div class="a" style="left:575px;top:584px;width:84px;height:6px;background:#7cc368"></div>
<svg class="a" style="left:612px;top:584px" width="12" height="6" viewBox="0 0 12 6"><path d="M2.4 0 H9.6 L6 2.4 Z" fill="#fff"/><path d="M1.8 1 L6 4.8 L10.2 1" fill="none" stroke="#fff" stroke-width="1.1"/></svg>
<div class="a" style="left:23px;top:593px;width:836px;height:1px;background:#a9dd9c"></div>
<div class="a" style="left:102px;top:593px;width:1px;height:5px;background:#a9dd9c"></div>
<div class="a" style="left:194px;top:593px;width:1px;height:5px;background:#a9dd9c"></div>
<div class="a" style="left:274px;top:593px;width:1px;height:5px;background:#a9dd9c"></div>
<div class="a" style="left:354px;top:593px;width:1px;height:5px;background:#a9dd9c"></div>
<div class="a" style="left:434px;top:593px;width:1px;height:5px;background:#a9dd9c"></div>
<div class="a" style="left:514px;top:593px;width:1px;height:5px;background:#a9dd9c"></div>
<div class="a" style="left:606px;top:593px;width:1px;height:5px;background:#a9dd9c"></div>
<div class="a" style="left:698px;top:593px;width:1px;height:5px;background:#a9dd9c"></div>
<div class="a" style="left:778px;top:593px;width:1px;height:5px;background:#a9dd9c"></div>
<div class="a" style="left:858px;top:593px;width:1px;height:5px;background:#a9dd9c"></div>
<div class="a" style="left:607px;top:593px;width:92px;height:5px;background:#7cc368"></div>
</body></html>
